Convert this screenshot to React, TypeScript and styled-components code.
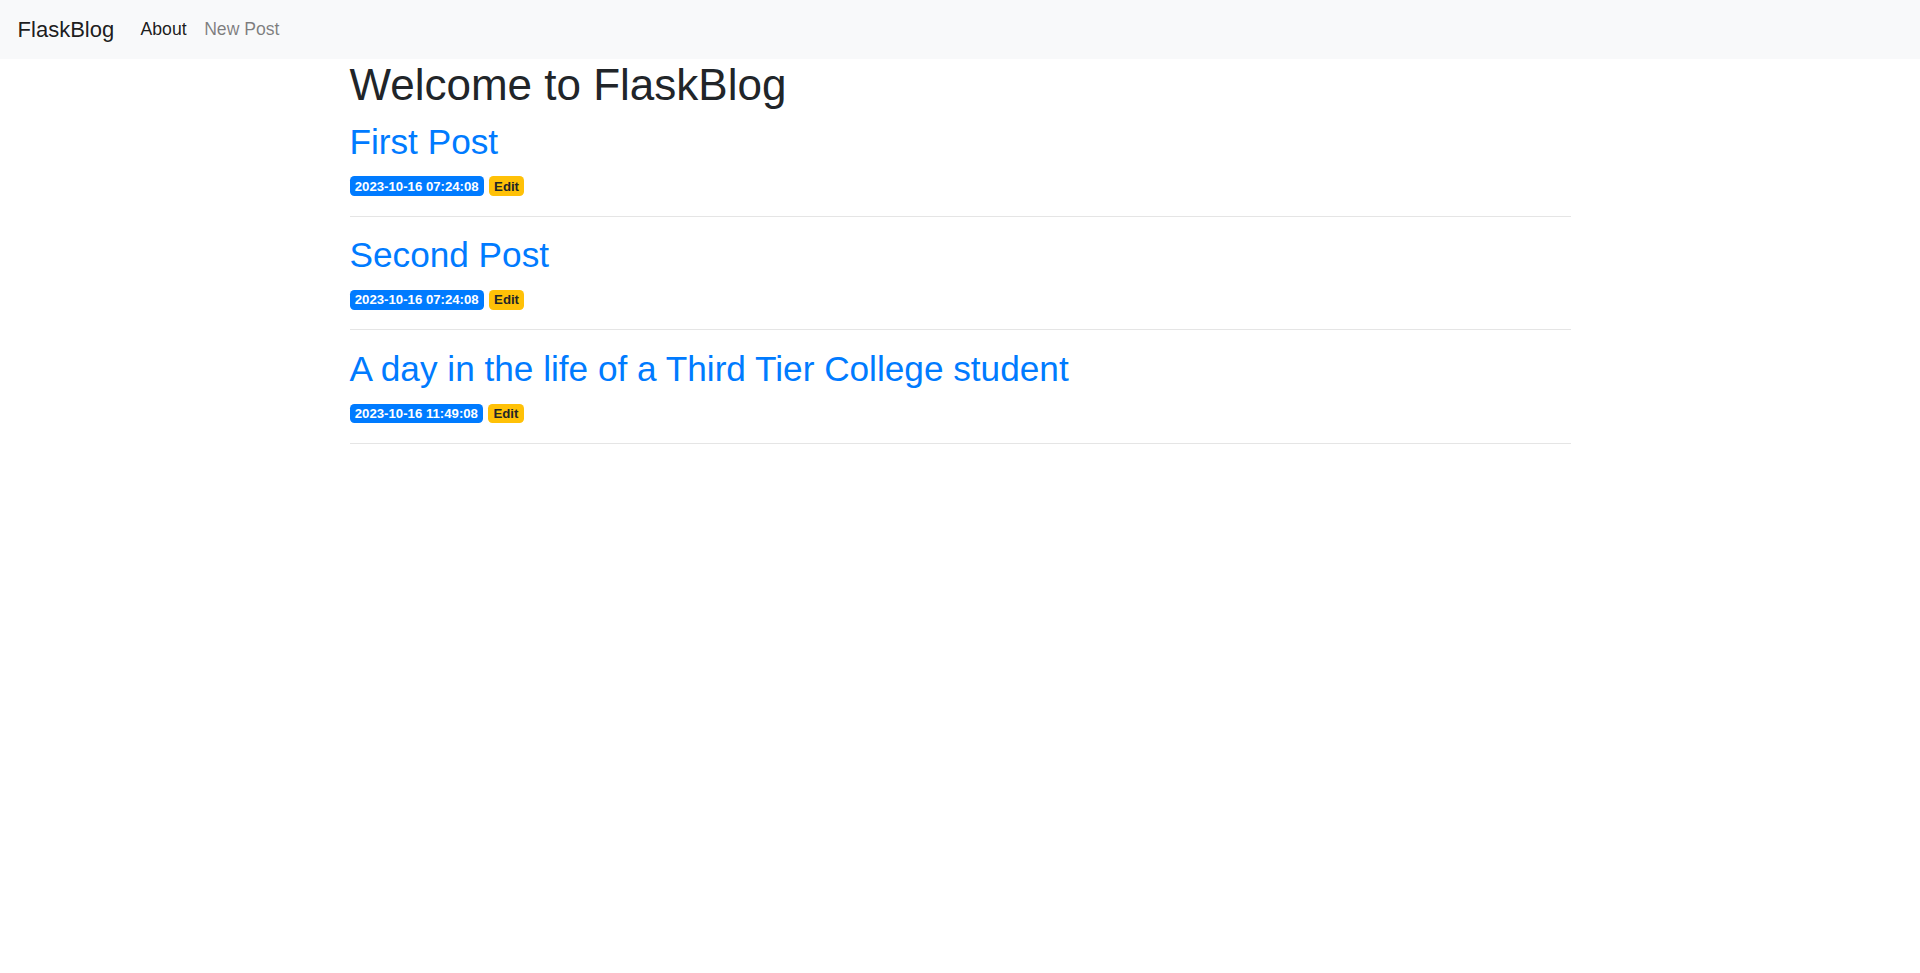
import styled, { createGlobalStyle } from 'styled-components';

const GlobalStyle = createGlobalStyle`
	html {
		font-size: 17.6px;
	}

	body {
		margin: 0;
		font-family: 'Liberation Sans', Arial, sans-serif;
		font-size: 1rem;
		line-height: 1.5;
		color: #212529;
		background-color: #fff;
	}

	*, *::before, *::after {
		box-sizing: border-box;
	}
`;

const Navbar = styled.nav`
	display: flex;
	align-items: center;
	min-height: 59px;
	padding: 0 1rem;
	background-color: #f8f9fa;
`;

const Brand = styled.a`
	margin-right: 1rem;
	padding: 0.3125rem 0;
	font-size: 1.25rem;
	color: rgba(0, 0, 0, 0.9);
	text-decoration: none;
`;

const NavList = styled.ul`
	display: flex;
	margin: 0;
	padding: 0;
	list-style: none;
`;

const NavLink = styled.a<{ $active?: boolean }>`
	display: block;
	padding: 0.5rem;
	color: ${(p) => (p.$active ? 'rgba(0, 0, 0, 0.9)' : 'rgba(0, 0, 0, 0.5)')};
	text-decoration: none;
`;

const Container = styled.main`
	width: 100%;
	max-width: 71.25rem;
	margin: 0 auto;
	padding: 0 0.9375rem;
`;

const Title = styled.h1`
	margin: 0 0 0.5rem;
	font-size: 2.5rem;
	font-weight: 500;
	line-height: 1.2;
`;

const PostLink = styled.a`
	color: #007bff;
	text-decoration: none;
`;

const PostTitle = styled.h2`
	margin: 0 0 0.5rem;
	font-size: 2rem;
	font-weight: 500;
	line-height: 1.2;
`;

const Badge = styled.span<{ $variant: 'primary' | 'warning' }>`
	display: inline-block;
	padding: 0.25em 0.4em;
	font-size: 75%;
	font-weight: 700;
	line-height: 1;
	text-align: center;
	white-space: nowrap;
	vertical-align: baseline;
	border-radius: 0.25rem;
	text-decoration: none;
	color: ${(p) => (p.$variant === 'primary' ? '#fff' : '#212529')};
	background-color: ${(p) => (p.$variant === 'primary' ? '#007bff' : '#ffc107')};
`;

const Divider = styled.hr`
	margin: 1rem 0;
	border: 0;
	border-top: 1px solid rgba(0, 0, 0, 0.1);
`;

const posts = [
	{ id: 1, title: 'First Post', created: '2023-10-16 07:24:08' },
	{ id: 2, title: 'Second Post', created: '2023-10-16 07:24:08' },
	{ id: 3, title: 'A day in the life of a Third Tier College student', created: '2023-10-16 11:49:08' },
];

function App() {
	return (
		<>
			<GlobalStyle />
			<Navbar>
				<Brand href='#'>FlaskBlog</Brand>
				<NavList>
					<li>
						<NavLink href='#' $active>About</NavLink>
					</li>
					<li>
						<NavLink href='#'>New Post</NavLink>
					</li>
				</NavList>
			</Navbar>
			<Container>
				<Title>Welcome to FlaskBlog</Title>
				{posts.map((post) => (
					<div key={post.id}>
						<PostLink href='#'>
							<PostTitle>{post.title}</PostTitle>
						</PostLink>
						<Badge $variant='primary'>{post.created}</Badge>{' '}
						<Badge as='a' href='#' $variant='warning'>Edit</Badge>
						<Divider />
					</div>
				))}
			</Container>
		</>
	);
}

export default App;
